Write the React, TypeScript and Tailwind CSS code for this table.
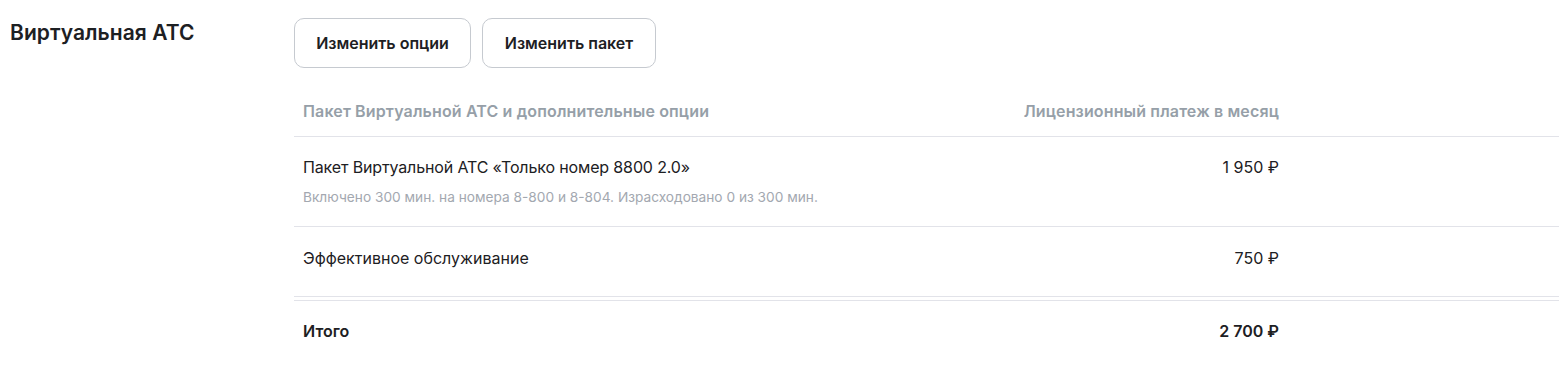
import React from "react";

const font = { fontFamily: "Inter, Roboto, 'Noto Sans', sans-serif" };

export default function App() {
  return (
    <div className="flex w-[1567px] h-[382px] bg-white text-[#1d2023]" style={font}>
      <div className="w-[294px] shrink-0 pl-[10px] pt-[19px]">
        <h2 className="text-[21px] leading-[28px] font-semibold tracking-[0.05px]">Виртуальная АТС</h2>
      </div>
      <div className="flex-1 pr-[8px] pt-[18px]">
        <div className="flex gap-[11px]">
          <button className="h-[50px] w-[177px] rounded-[10px] border border-[#c6cad0] text-[16px] font-semibold tracking-[0px]">
            Изменить опции
          </button>
          <button className="h-[50px] w-[174px] rounded-[10px] border border-[#c6cad0] text-[16px] font-semibold tracking-[0px]">
            Изменить пакет
          </button>
        </div>
        <div className="mt-[18px]">
          <div className="flex border-b border-[#e2e3e9] pl-[9px] pr-[280px] pt-[13px] pb-[13px] text-[16px] leading-[24px] font-semibold tracking-[0.14px] text-[#969fa8]">
            <div className="flex-1">Пакет Виртуальной АТС и дополнительные опции</div>
            <div>Лицензионный платеж в месяц</div>
          </div>
          <div className="flex border-b border-[#e2e3e9] pl-[9px] pr-[280px] pt-[18px] pb-[19px]">
            <div className="flex-1">
              <div className="text-[16px] leading-[24px] tracking-[-0.14px]">Пакет Виртуальной АТС «Только номер 8800 2.0»</div>
              <div className="mt-[8px] text-[13.7px] leading-[20px] text-[#a3a8b0]">
                Включено 300 мин. на номера 8-800 и 8-804. Израсходовано 0 из 300 мин.
              </div>
            </div>
            <div className="text-[16px] leading-[24px]">1 950 ₽</div>
          </div>
          <div className="flex border-b border-[#e2e3e9] pl-[9px] pr-[280px] pt-[19px] pb-[26px] text-[16px] leading-[24px]">
            <div className="flex-1">Эффективное обслуживание</div>
            <div>750 ₽</div>
          </div>
          <div className="mt-[3px] flex border-t border-[#e2e3e9] pl-[9px] pr-[280px] pt-[18px] pb-[18px] text-[16px] leading-[24px] font-semibold">
            <div className="flex-1">Итого</div>
            <div>2 700 ₽</div>
          </div>
        </div>
      </div>
    </div>
  );
}
